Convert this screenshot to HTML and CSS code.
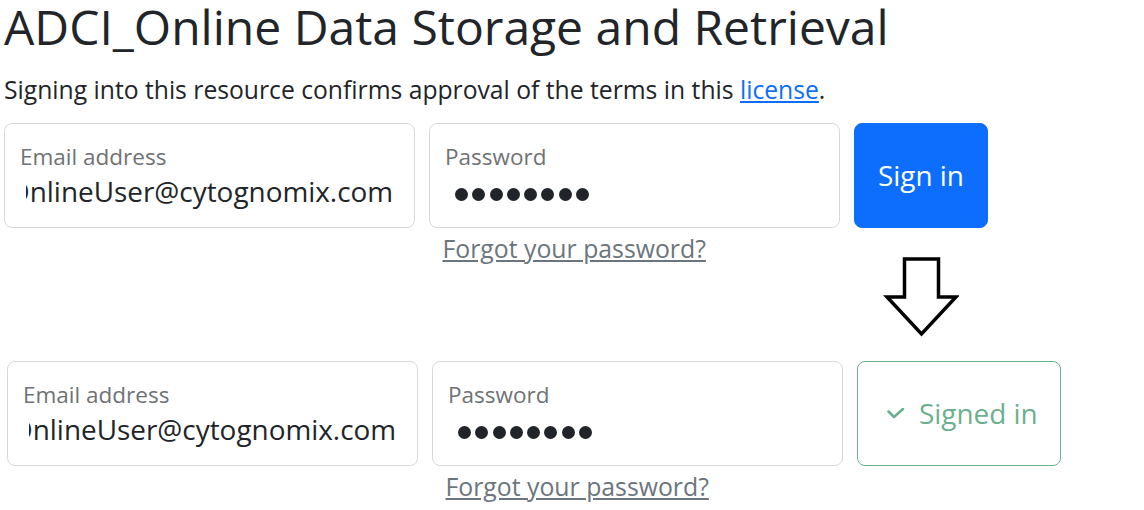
FILE: index.html
```html
<!DOCTYPE html>
<html lang="en">
<head>
  <meta charset="UTF-8">
  <meta name="viewport" content="width=device-width, initial-scale=1.0">
  <title>ADCI_Online Data Storage and Retrieval</title>
  <link rel="stylesheet" href="styles.css">
</head>
<body>
  <header class="intro">
    <h1>ADCI_Online Data Storage and Retrieval</h1>
    <p>Signing into this resource confirms approval of the terms in this <a href="#">license</a>.</p>
  </header>

  <!-- Before: sign in form -->
  <form class="signin">
    <div class="field">
      <span class="field-label">Email address</span>
      <div class="field-value"><span class="scrolled">OnlineUser@cytognomix.com</span></div>
    </div>
    <div class="field">
      <span class="field-label">Password</span>
      <div class="dots"><i></i><i></i><i></i><i></i><i></i><i></i><i></i><i></i></div>
    </div>
    <button type="button" class="btn btn-primary">Sign in</button>
    <a class="forgot" href="#">Forgot your password?</a>
    <svg class="arrow" width="76" height="84" viewBox="0 0 76 84">
      <polygon points="21.5,4 55.5,4 55.5,42 73,42 38.5,79 4,42 21.5,42" />
    </svg>
  </form>

  <!-- After: signed in -->
  <form class="signin signin-done">
    <div class="field">
      <span class="field-label">Email address</span>
      <div class="field-value"><span class="scrolled">OnlineUser@cytognomix.com</span></div>
    </div>
    <div class="field">
      <span class="field-label">Password</span>
      <div class="dots"><i></i><i></i><i></i><i></i><i></i><i></i><i></i><i></i></div>
    </div>
    <button type="button" class="btn btn-success" disabled>
      <svg class="check" width="18" height="11" viewBox="0 0 18 11">
        <polyline points="1.5,3.5 7,9 16,1" />
      </svg>
      Signed in
    </button>
    <a class="forgot" href="#">Forgot your password?</a>
  </form>
</body>
</html>
```
FILE: styles.css
```css
body {
  margin: 0;
  font-family: "Open Sans", sans-serif;
  color: #212529;
  background: #fff;
}
.intro {
  padding-left: 4px;
}
h1 {
  margin: -6px 0 0;
  font-size: 48px;
  font-weight: 400;
  line-height: 66px;
}
.intro p {
  margin: 11px 0 0;
  font-size: 24.7px;
  line-height: 37px;
}
.intro a {
  color: #0d6efd;
}
.signin {
  display: grid;
  grid-template-columns: 411px 411px auto;
  column-gap: 14px;
  justify-content: start;
  align-items: start;
  margin-top: 15px;
  padding-left: 4px;
}
.signin-done {
  margin-top: 22px;
  padding-left: 7px;
}
.field {
  box-sizing: border-box;
  height: 105px;
  padding: 19px 15px 0;
  border: 1px solid #d5d9de;
  border-radius: 8px;
  background: #fff;
}
.field-label {
  display: block;
  font-size: 22.5px;
  line-height: 27px;
  color: #6f7275;
}
.field-value {
  margin: 4px 0 0 6px;
  overflow: hidden;
  white-space: nowrap;
  font-size: 27.9px;
  line-height: 35px;
}
.scrolled {
  display: block;
  text-indent: -18px;
}
.dots {
  display: flex;
  gap: 4.3px;
  height: 35px;
  box-sizing: border-box;
  margin: 4px 0 0 10px;
  padding-top: 14px;
}
.dots i {
  width: 13px;
  height: 13px;
  border-radius: 50%;
  background: #212529;
}
.btn {
  display: flex;
  align-items: center;
  justify-content: center;
  align-self: stretch;
  border-radius: 8px;
  font-family: inherit;
  font-size: 27.9px;
  line-height: 1.5;
  cursor: pointer;
}
.btn-primary {
  padding: 0 23px;
  border: 1px solid #0d6efd;
  background: #0d6efd;
  color: #fff;
}
.btn-success {
  padding: 0 22px 0 29px;
  border: 1px solid #198754;
  background: #fff;
  color: #198754;
  opacity: 0.65;
  cursor: default;
}
.check {
  margin-right: 14px;
  fill: none;
  stroke: currentColor;
  stroke-width: 2.5;
  stroke-linecap: round;
  stroke-linejoin: round;
}
.forgot {
  grid-column: 2;
  margin: 2px 0 0 13.5px;
  justify-self: start;
  font-size: 24.8px;
  line-height: 37px;
  color: #6c757d;
}
.arrow {
  grid-column: 3;
  grid-row: 2;
  justify-self: center;
  margin-top: 27px;
  fill: none;
  stroke: #000;
  stroke-width: 3.5;
  stroke-linejoin: miter;
}
```
